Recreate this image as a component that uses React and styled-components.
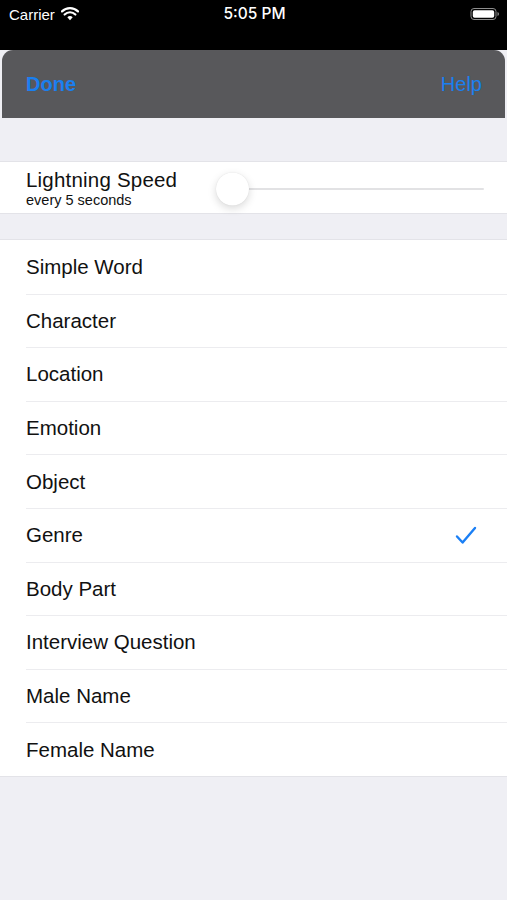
import React, { useState } from "react";
import styled, { createGlobalStyle } from "styled-components";

const categories = [
  "Simple Word",
  "Character",
  "Location",
  "Emotion",
  "Object",
  "Genre",
  "Body Part",
  "Interview Question",
  "Male Name",
  "Female Name",
];

const GlobalStyle = createGlobalStyle`
  * { box-sizing: border-box; }
  body {
    margin: 0;
    background: #000;
    font-family: "Liberation Sans", Arial, sans-serif;
  }
`;

function WifiIcon() {
  return (
    <svg width="18" height="14" viewBox="0 0 18 14">
      <path d="M9 13.2 L6.3 10.3 A3.9 3.9 0 0 1 11.7 10.3 Z" fill="#fff" />
      <path
        d="M3.6 7.5 A7.6 7.6 0 0 1 14.4 7.5"
        stroke="#fff"
        strokeWidth="2.2"
        fill="none"
        strokeLinecap="round"
      />
      <path
        d="M1 4.4 A11.4 11.4 0 0 1 17 4.4"
        stroke="#fff"
        strokeWidth="2.2"
        fill="none"
        strokeLinecap="round"
      />
    </svg>
  );
}

function BatteryIcon() {
  return (
    <svg width="30" height="14" viewBox="0 0 30 14">
      <rect x="1" y="1.5" width="25" height="11" rx="3" fill="none" stroke="#8e8e8e" strokeWidth="1" />
      <rect x="2.8" y="3.2" width="21.4" height="7.6" rx="1.8" fill="#fff" />
      <path d="M27.5 5 Q29 5.5 29 7 Q29 8.5 27.5 9 Z" fill="#8e8e8e" />
    </svg>
  );
}

function CheckIcon() {
  return (
    <svg width="22" height="19" viewBox="0 0 22 19">
      <path
        d="M2 10.5 L7.6 16.5 L20 2"
        stroke="#1a7ff5"
        strokeWidth="2.4"
        fill="none"
        strokeLinecap="round"
        strokeLinejoin="round"
      />
    </svg>
  );
}

export default function App() {
  const [selected, setSelected] = useState("Genre");

  return (
    <Page>
      <GlobalStyle />
      <StatusBar>
        <StatusLeft>
          Carrier
          <WifiIcon />
        </StatusLeft>
        <Clock>5:05 PM</Clock>
        <StatusRight>
          <BatteryIcon />
        </StatusRight>
      </StatusBar>
      <Sheet>
        <NavBar>
          <NavButton bold>Done</NavButton>
          <NavButton>Help</NavButton>
        </NavBar>
        <Gap height={43} />
        <SliderRow>
          <SpeedLabel>
            <Title>Lightning Speed</Title>
            <Subtitle>every 5 seconds</Subtitle>
          </SpeedLabel>
          <Track>
            <Thumb />
          </Track>
        </SliderRow>
        <Gap height={25} />
        <List>
          {categories.map((name) => (
            <Row key={name} onClick={() => setSelected(name)}>
              <RowText>{name}</RowText>
              {selected === name && <CheckIcon />}
            </Row>
          ))}
        </List>
      </Sheet>
    </Page>
  );
}

const Page = styled.div`
  min-height: 900px;
  background: #000;
  display: flex;
  flex-direction: column;
`;

const StatusBar = styled.div`
  height: 50px;
  display: grid;
  grid-template-columns: 1fr auto 1fr;
  align-items: start;
  padding: 5px 7px 0 9px;
  color: #fff;
  font-size: 15px;
`;

const StatusLeft = styled.div`
  display: flex;
  align-items: center;
  gap: 6px;
  height: 18px;
`;

const Clock = styled.div`
  font-family: Inter, "Liberation Sans", sans-serif;
  font-weight: 500;
  font-size: 15.5px;
  height: 18px;
  line-height: 18px;
`;

const StatusRight = styled.div`
  display: flex;
  justify-content: flex-end;
  height: 18px;
  align-items: center;
`;

const Sheet = styled.div`
  flex: 1;
  background: #efeff4;
  display: flex;
  flex-direction: column;
`;

const NavBar = styled.div`
  height: 68px;
  margin: 0 2px;
  background: #58585b;
  border-radius: 11px 11px 0 0;
  display: flex;
  align-items: center;
  justify-content: space-between;
  padding: 0 23px 0 24px;
`;

const NavButton = styled.span`
  color: #1a7ff0;
  font-size: 20px;
  font-weight: ${(p) => (p.bold ? 700 : 400)};
`;

const Gap = styled.div`
  height: ${(p) => p.height}px;
`;

const SliderRow = styled.div`
  height: 53px;
  background: #fff;
  border-top: 1px solid #e3e3e8;
  border-bottom: 1px solid #e3e3e8;
  display: flex;
  align-items: center;
  padding: 0 23px 0 26px;
`;

const SpeedLabel = styled.div`
  display: flex;
  flex-direction: column;
  width: 190px;
  padding-top: 2px;
`;

const Title = styled.span`
  font-size: 20.5px;
  line-height: 23px;
  color: #111;
  letter-spacing: 0.2px;
`;

const Subtitle = styled.span`
  font-size: 14.5px;
  line-height: 18px;
  color: #111;
`;

const Track = styled.div`
  position: relative;
  flex: 1;
  height: 2px;
  background: #e2e2e4;
  border-radius: 1px;
  margin-top: 2px;
`;

const Thumb = styled.div`
  position: absolute;
  left: 0;
  top: 50%;
  width: 33px;
  height: 33px;
  border-radius: 50%;
  background: #fff;
  transform: translate(0, -50%);
  box-shadow: 0 3px 8px rgba(0, 0, 0, 0.15), 0 0 1px rgba(0, 0, 0, 0.12);
`;

const List = styled.div`
  background: #fff;
  border-top: 1px solid #e3e3e8;
  border-bottom: 1px solid #e3e3e8;
  padding-left: 26px;
`;

const Row = styled.div`
  height: 53.6px;
  display: flex;
  align-items: center;
  justify-content: space-between;
  padding-right: 30px;
  cursor: pointer;
  & + & {
    border-top: 1px solid #ececef;
  }
`;

const RowText = styled.span`
  font-size: 20.5px;
  color: #111;
`;
